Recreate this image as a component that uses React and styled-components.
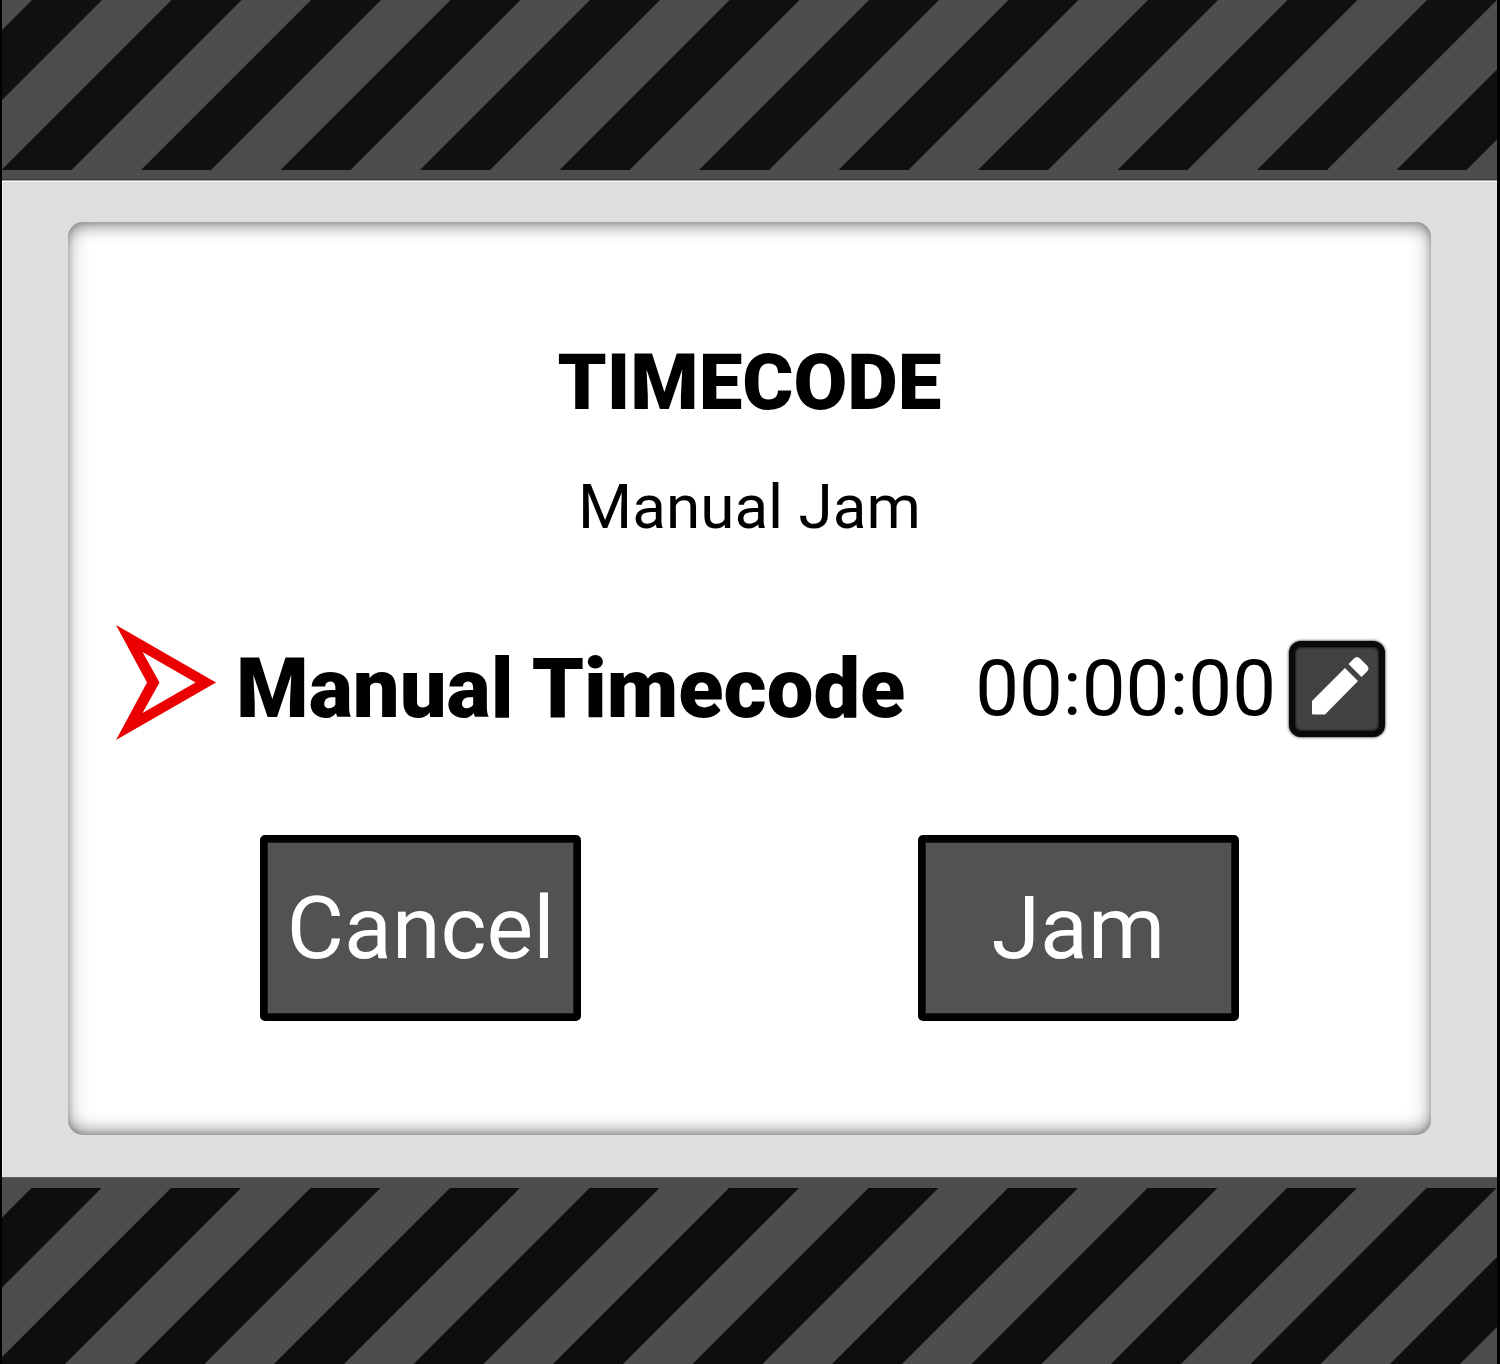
import React from "react";
import styled, { createGlobalStyle } from "styled-components";

const GlobalStyle = createGlobalStyle`
  *, *::before, *::after { box-sizing: border-box; }
  body {
    margin: 0;
    background: #000;
    color: #000;
    font-family: Roboto, "Liberation Sans", sans-serif;
  }
`;

const Device = styled.div`
  display: flex;
  flex-direction: column;
  min-height: 100vh;
  padding: 0 3px 0 2px;
`;

const Band = styled.div`
  display: flex;
  flex-direction: column;
  flex: ${(p) => (p.$grow ? "1 0 auto" : "none")};
  background: #4d4d4d;
  padding: ${(p) => (p.$grow ? "11px 0 0" : "0 0 10px")};
  box-shadow: inset 0 ${(p) => (p.$grow ? "1px 0 #626262" : "-1px 0 #3c3c3c")};
`;

const StripeArt = styled.svg`
  display: block;
  width: 100%;
  height: ${(p) => p.$height}px;
`;

const Bezel = styled.main`
  padding: 42px 66px;
  background: #dedede;
  box-shadow: inset 0 1px 0 #a0a0a0, inset 0 2px 0 #f8f8f8, inset 1px 0 0 #f0f0f0;
`;

const Screen = styled.section`
  display: flex;
  flex-direction: column;
  padding: 115px 0 114px;
  border-radius: 15px;
  background: #fff;
  box-shadow: inset 0 0 22px rgba(0, 0, 0, 0.3), inset 0 0 6px rgba(0, 0, 0, 0.15),
    inset 0 10px 16px -8px rgba(0, 0, 0, 0.35), inset 0 -10px 16px -8px rgba(0, 0, 0, 0.35);
`;

const Title = styled.h1`
  margin: 0;
  font-size: 78px;
  line-height: 92px;
  font-weight: 900;
  text-align: center;
`;

const Subtitle = styled.h2`
  margin: 42px 0 0;
  font-size: 62px;
  line-height: 72px;
  font-weight: 400;
  text-align: center;
`;

const SettingRow = styled.div`
  display: flex;
  align-items: flex-start;
  margin-top: 82px;
  padding: 0 46px 0 48px;
`;

const Pointer = styled.svg`
  flex: none;
  width: 100px;
  height: 116px;
  margin-right: 20px;
`;

const SettingValues = styled.div`
  display: flex;
  flex: 1;
  align-items: center;
  padding-top: 16px;
`;

const SettingName = styled.span`
  font-size: 83px;
  line-height: 96px;
  font-weight: 900;
  white-space: nowrap;
`;

const TimeValue = styled.output`
  margin-left: auto;
  font-size: 78px;
  line-height: 92px;
  white-space: nowrap;
`;

const EditButton = styled.button`
  flex: none;
  width: 96px;
  height: 96px;
  margin-left: 13px;
  padding: 0;
  border: 6px solid #0a0a0a;
  border-radius: 12px;
  background: #424242;
  box-shadow: inset 0 0 2px 1px #1c1c1c, 0 0 3px #000;
  cursor: pointer;
`;

const PencilArt = styled.svg`
  display: block;
  width: 84px;
  height: 84px;
`;

const Actions = styled.div`
  display: grid;
  grid-template-columns: 1fr 1fr;
  justify-items: center;
  margin-top: 94px;
  padding: 0 24px;
`;

const ActionButton = styled.button`
  width: 321px;
  height: 186px;
  padding: 0;
  border: 7px solid #000;
  border-radius: 5px;
  background: #525252;
  box-shadow: inset 0 0 0 1px #161616;
  color: #fff;
  font-family: inherit;
  font-size: 88px;
  line-height: 104px;
  cursor: pointer;
`;

/* Diagonal warning stripes: two 139.5px periods per tile. */
function Stripes({ id, height, start, color }) {
  return (
    <StripeArt $height={height} aria-hidden="true">
      <defs>
        <pattern id={id} width="279" height={height} patternUnits="userSpaceOnUse">
          {[-3, -2, -1, 0, 1, 2].map((n) => {
            const x = start + n * 139.5;
            return (
              <polygon
                key={n}
                fill={color}
                points={`${x},${height} ${x + 70},${height} ${x + 70 + height},0 ${x + height},0`}
              />
            );
          })}
        </pattern>
      </defs>
      <rect width="100%" height={height} fill={`url(#${id})`} />
    </StripeArt>
  );
}

export default function App() {
  return (
    <>
      <GlobalStyle />
      <Device>
        <Band>
          <Stripes id="stripes-top" height={170} start={-0.5} color="#101010" />
        </Band>
        <Bezel>
          <Screen>
            <Title>TIMECODE</Title>
            <Subtitle>Manual Jam</Subtitle>
            <SettingRow>
              <Pointer viewBox="0 0 100 116" aria-hidden="true">
                <path
                  fill="#ea0000"
                  fillRule="evenodd"
                  d="M0 0L100 57.500L0 115L31 57.500ZM26.500 27L43.500 57.500L26.500 88L79.500 57.500Z"
                />
              </Pointer>
              <SettingValues>
                <SettingName id="timecode-name">Manual Timecode</SettingName>
                <TimeValue aria-labelledby="timecode-name">00:00:00</TimeValue>
                <EditButton type="button" aria-label="Edit manual timecode">
                  <PencilArt viewBox="6 6 84 84" aria-hidden="true">
                    <path
                      fill="#fff"
                      d="M23 60L56 27L69 40L36 73.5H24Q23 73.5 23 72.5ZM59.5 23L65 17.5Q68 14.5 71 17.5L78 24.5Q81 27.5 78 30.5L72.5 36Z"
                    />
                  </PencilArt>
                </EditButton>
              </SettingValues>
            </SettingRow>
            <Actions>
              <ActionButton type="button">Cancel</ActionButton>
              <ActionButton type="button">Jam</ActionButton>
            </Actions>
          </Screen>
        </Bezel>
        <Band $grow>
          <Stripes id="stripes-bottom" height={176} start={-7} color="#0e0e0e" />
        </Band>
      </Device>
    </>
  );
}
